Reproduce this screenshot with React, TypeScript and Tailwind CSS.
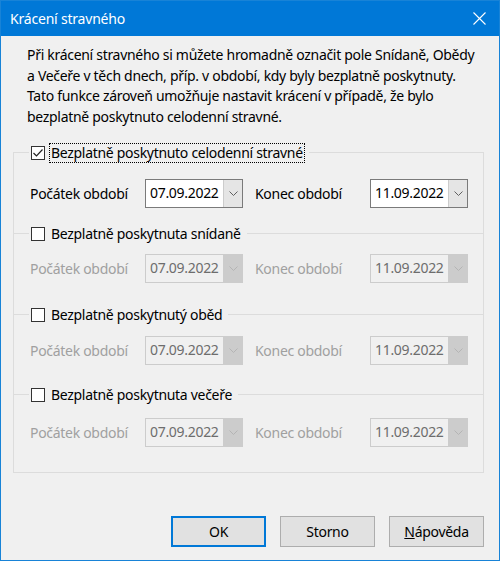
import React from "react";

const font = { fontFamily: '"Segoe UI", "Noto Sans", "Open Sans", sans-serif' };

function Chevron({ disabled }: { disabled?: boolean }) {
  return (
    <svg width="9" height="5" viewBox="0 0 9 5">
      <path d="M0.5 0.5 L4.5 4.5 L8.5 0.5" fill="none" stroke={disabled ? "#b4b4b4" : "#606060"} strokeWidth="1" />
    </svg>
  );
}

function Combo({ value, disabled }: { value: string; disabled?: boolean }) {
  return (
    <div
      className={
        "w-[98px] h-[29px] flex border " +
        (disabled ? "border-[#cccccc] bg-[#f0f0f0]" : "border-[#7a7a7a] bg-white")
      }
    >
      <div
        className={
          "flex-1 pl-[4px] text-[14px] leading-[26px] tracking-[-0.3px] " +
          (disabled ? "text-[#6d6d6d]" : "text-black")
        }
      >
        {value}
      </div>
      <div
        className={
          "w-[19px] h-full flex items-center justify-center border-l " +
          (disabled ? "bg-[#cccccc] border-[#cccccc]" : "bg-[#e5e5e5] border-[#cccccc]")
        }
      >
        <Chevron disabled={disabled} />
      </div>
    </div>
  );
}

function Checkbox({ checked }: { checked?: boolean }) {
  return (
    <div className="w-[14px] h-[14px] border border-[#333333] bg-white flex items-center justify-center">
      {checked && (
        <svg width="12" height="12" viewBox="0 0 12 12">
          <path d="M1.5 6 L4.5 9 L10.5 2.5" fill="none" stroke="#222" strokeWidth="1.2" />
        </svg>
      )}
    </div>
  );
}

function Group({
  label,
  checked,
  disabled,
  first,
  rowTop,
  height,
  focus,
}: {
  label: string;
  checked?: boolean;
  disabled?: boolean;
  first?: boolean;
  rowTop: number;
  height: number;
  focus?: boolean;
}) {
  return (
    <div className={(first ? "" : "border-t border-[#dcdcdc] ") + "flex flex-col"} style={{ height }}>
      <div className="flex -mt-[10px] ml-[15px]">
        <div className="flex items-center gap-[4px] bg-[#f0f0f0] pl-[2px] pr-[4px] h-[20px]">
          <Checkbox checked={checked} />
          <span
            className={
              "text-[14px] leading-[18px] tracking-[-0.3px] text-black px-[1px] " +
              (focus ? "border border-dotted border-black" : "border border-transparent")
            }
          >
            {label}
          </span>
        </div>
      </div>
      <div className="flex items-center pl-[16px] tracking-[-0.3px]" style={{ marginTop: rowTop }}>
        <div className={"w-[115px] text-[14px] " + (disabled ? "text-[#a0a0a0]" : "text-black")}>Počátek období</div>
        <Combo value="07.09.2022" disabled={disabled} />
        <div className={"w-[115px] ml-[12px] text-[14px] " + (disabled ? "text-[#a0a0a0]" : "text-black")}>Konec období</div>
        <Combo value="11.09.2022" disabled={disabled} />
      </div>
    </div>
  );
}

function Button({ children, primary }: { children: React.ReactNode; primary?: boolean }) {
  return (
    <div
      className={
        "w-[95px] h-[31px] flex items-center justify-center text-[14px] tracking-[-0.3px] text-black bg-[#e1e1e1] " +
        (primary ? "border-2 border-[#0078d7]" : "border border-[#adadad]")
      }
    >
      {children}
    </div>
  );
}

export default function App() {
  return (
    <div style={font} className="w-[500px] h-[561px] border border-[#1883d7] flex flex-col overflow-hidden">
      <div className="h-[35px] bg-[#0078d7] flex items-center justify-between pl-[9px] pr-[13px]">
        <span className="text-white text-[14px] tracking-[-0.2px]">Krácení stravného</span>
        <svg width="13" height="13" viewBox="0 0 13 13">
          <path d="M0.5 0.5 L12.5 12.5 M12.5 0.5 L0.5 12.5" stroke="white" strokeWidth="1.1" />
        </svg>
      </div>
      <div className="flex-1 bg-[#f0f0f0] flex flex-col">
        <div className="pl-[26px] pt-[9px] text-[14px] leading-[20.5px] tracking-[-0.3px] text-black whitespace-nowrap">
          <div>Při krácení stravného si můžete hromadně označit pole Snídaně, Obědy</div>
          <div>a Večeře v těch dnech, příp. v období, kdy byly bezplatně poskytnuty.</div>
          <div>Tato funkce zároveň umožňuje nastavit krácení v případě, že bylo</div>
          <div>bezplatně poskytnuto celodenní stravné.</div>
        </div>
        <div className="ml-[12px] w-[471px] mt-[25px] border border-[#dcdcdc] flex flex-col">
          <Group label="Bezplatně poskytnuto celodenní stravné" checked first focus rowTop={16} height={80} />
          <Group label="Bezplatně poskytnuta snídaně" disabled rowTop={10} height={81} />
          <Group label="Bezplatně poskytnutý oběd" disabled rowTop={11} height={80} />
          <Group label="Bezplatně poskytnuta večeře" disabled rowTop={13} height={78} />
        </div>
        <div className="flex-1" />
        <div className="flex justify-end gap-[14px] pr-[15px] pb-[13px]">
          <Button primary>OK</Button>
          <Button>Storno</Button>
          <Button>
            <span>
              <span className="underline">N</span>ápověda
            </span>
          </Button>
        </div>
      </div>
    </div>
  );
}
